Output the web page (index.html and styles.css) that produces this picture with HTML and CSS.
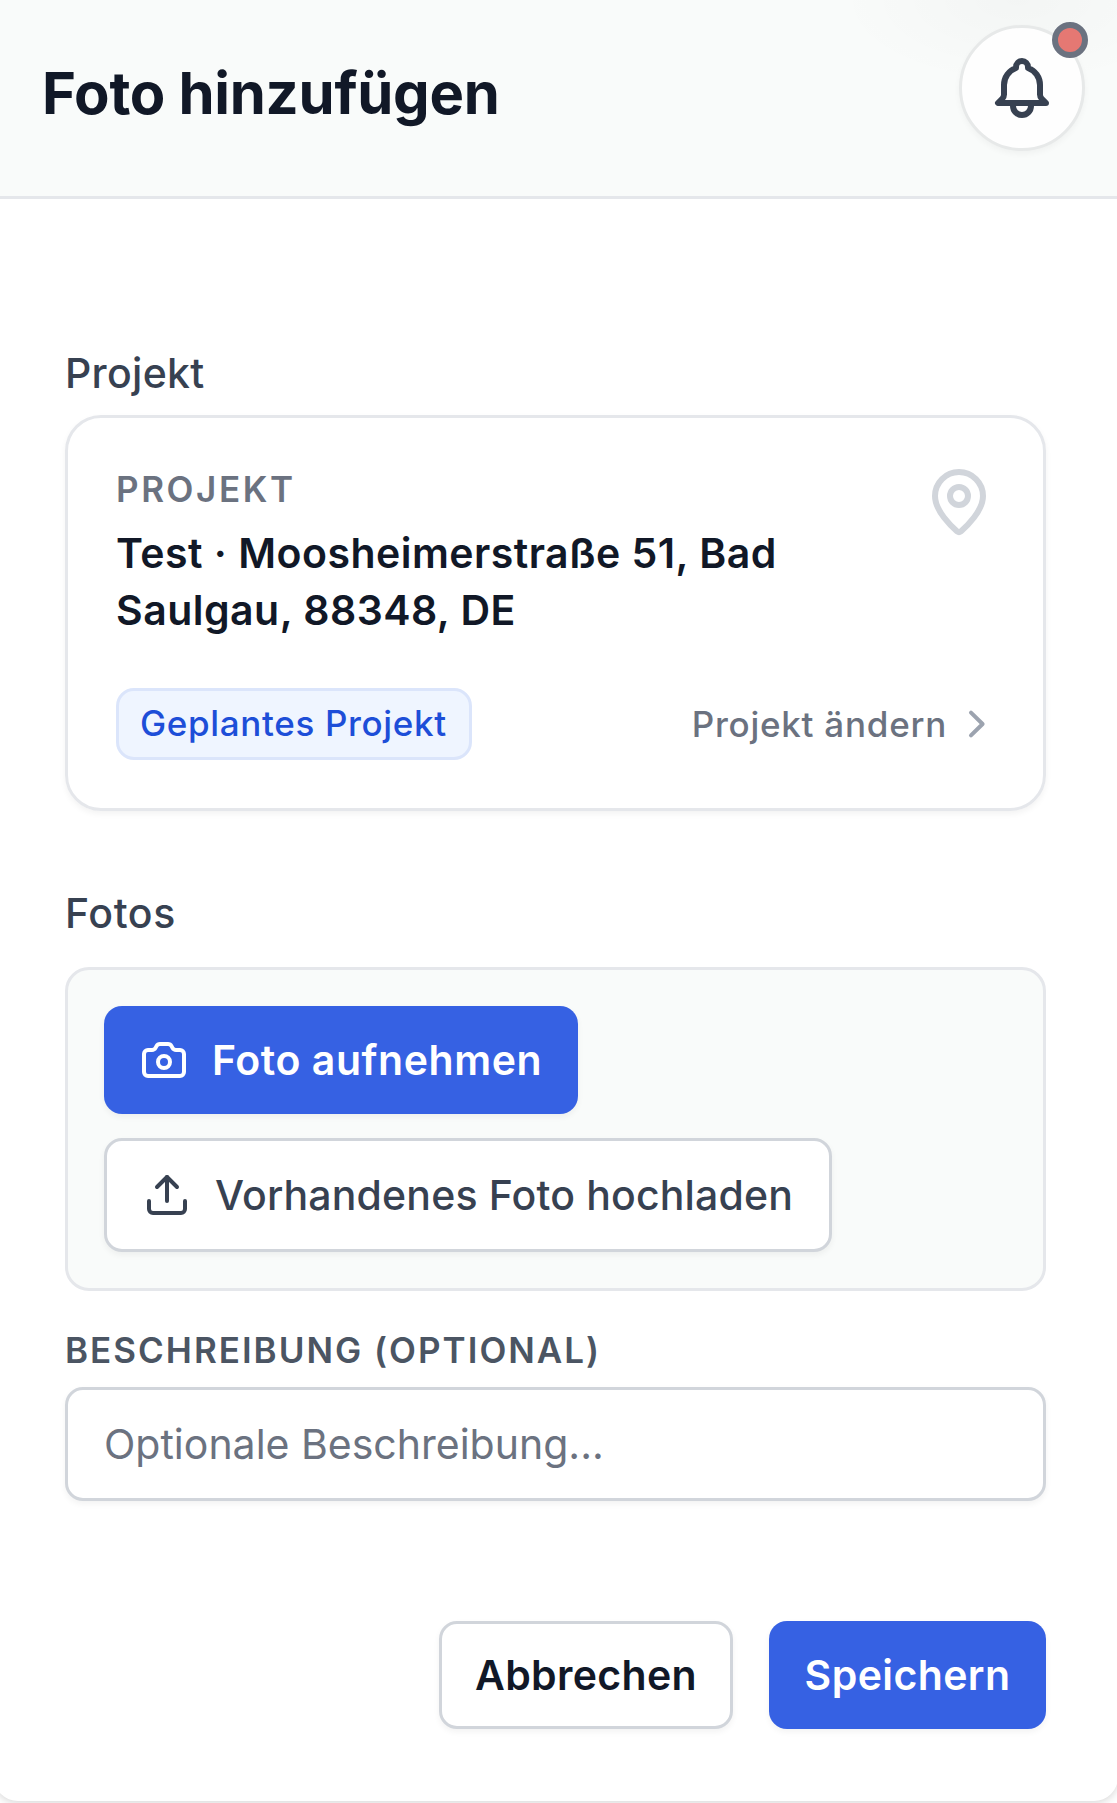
FILE: index.html
```
<!DOCTYPE html>
<html lang="de">
<head>
    <meta charset="UTF-8">
    <meta name="viewport" content="width=device-width, initial-scale=1.0">
    <title>Foto hinzufügen</title>
    <link rel="stylesheet" href="styles.css">
</head>
<body>
    <div class="panel">
        <header>
            <h1>Foto hinzufügen</h1>
            <button class="bell-button" aria-label="Benachrichtigungen">
                <svg class="bell-icon" viewBox="0 0 24 24">
                    <path d="M15 17h5l-1.405-1.405A2.032 2.032 0 0118 14.158V11a6.002 6.002 0 00-4-5.659V5a2 2 0 10-4 0v.341C7.67 6.165 6 8.388 6 11v3.159c0 .538-.214 1.055-.595 1.436L4 17h5m6 0v1a3 3 0 11-6 0v-1m6 0H9"/>
                </svg>
                <span class="bell-dot"></span>
            </button>
        </header>

        <form>
            <p class="field-label project-label">Projekt</p>
            <div class="project-card">
                <div class="project-top">
                    <div>
                        <p class="project-kicker">Projekt</p>
                        <h2>Test · Moosheimerstraße 51, Bad<br>Saulgau, 88348, DE</h2>
                    </div>
                    <svg class="pin-icon" viewBox="0 0 24 24">
                        <path d="M20 10c0 4.993-5.539 10.193-7.399 11.799a1 1 0 0 1-1.202 0C9.539 20.193 4 14.993 4 10a8 8 0 0 1 16 0"/>
                        <circle cx="12" cy="10" r="3"/>
                    </svg>
                </div>
                <div class="project-bottom">
                    <span class="project-tag">Geplantes Projekt</span>
                    <a class="project-change">Projekt ändern
                        <svg class="chevron-icon" viewBox="0 0 42 42">
                            <path d="M18 9.6L29.6 21L18 32.4"/>
                        </svg>
                    </a>
                </div>
            </div>

            <p class="field-label photo-label">Fotos</p>
            <div class="photo-box">
                <button type="button" class="btn btn-primary btn-camera">
                    <svg viewBox="0 0 24 24">
                        <path d="M13.997 4a2 2 0 0 1 1.76 1.05l.486.9A2 2 0 0 0 18.003 7H20a2 2 0 0 1 2 2v9a2 2 0 0 1-2 2H4a2 2 0 0 1-2-2V9a2 2 0 0 1 2-2h1.997a2 2 0 0 0 1.759-1.048l.489-.904A2 2 0 0 1 10.004 4z"/>
                        <circle cx="12" cy="13" r="3"/>
                    </svg>
                    Foto aufnehmen
                </button>
                <button type="button" class="btn btn-upload">
                    <svg viewBox="0 0 24 24">
                        <path d="M12 3v12"/>
                        <path d="m17 8-5-5-5 5"/>
                        <path d="M21 15v4a2 2 0 0 1-2 2H5a2 2 0 0 1-2-2v-4"/>
                    </svg>
                    Vorhandenes Foto hochladen
                </button>
            </div>

            <label class="description-label" for="description">Beschreibung (optional)</label>
            <input type="text" id="description" placeholder="Optionale Beschreibung...">

            <div class="actions">
                <button type="button" class="btn btn-cancel">Abbrechen</button>
                <button type="button" class="btn btn-primary btn-save">Speichern</button>
            </div>
        </form>
    </div>
</body>
</html>
```
FILE: styles.css
```
*{
    margin: 0px;
    padding: 0px;
    box-sizing: border-box;
}

body{
    font-family: Inter, "Liberation Sans", sans-serif;
    background-color: #FFF;
    color: #111827;
    height: 1803px;
    overflow: hidden;
}

svg{
    fill: none;
    stroke: currentColor;
    stroke-width: 2;
    stroke-linecap: round;
    stroke-linejoin: round;
    flex-shrink: 0;
}

/* the dialog is slightly wider than the window */
.panel{
    height: 1801px;
    margin: 0px -1px 0px -6px;
    background-color: #FFF;
    border-radius: 0px 0px 24px 24px;
    box-shadow: 0px 2px 9px rgba(0,0,0,0.16);
}

header{
    height: 199px;
    padding: 25px 33px 0px 48px;
    display: flex;
    justify-content: space-between;
    align-items: flex-start;
    background-color: #F9FBFA;
    background-image: radial-gradient(ellipse 180px 85px at 1024px 0px, rgba(0,0,0,0.025), rgba(0,0,0,0));
    border-bottom: 3px solid #E5E7EB;
}

h1{
    margin-top: 26px;
    font-size: 58px;
    line-height: 84px;
    font-weight: 700;
    letter-spacing: -0.28px;
}

.bell-button{
    position: relative;
    width: 126px;
    height: 126px;
    display: flex;
    justify-content: center;
    align-items: center;
    color: #374151;
    background-color: #FEFEFE;
    border: 3px solid #E7E9E9;
    border-radius: 50%;
    box-shadow: 0px 3px 6px rgba(0,0,0,0.04);
}

.bell-icon{
    width: 72px;
    height: 72px;
}

.bell-dot{
    position: absolute;
    top: -6px;
    right: -6px;
    width: 36px;
    height: 36px;
    background-color: #E57873;
    border: 6px solid #6B7280;
    border-radius: 50%;
}

form{
    padding: 144px 72px 72px 71px;
}

.field-label{
    font-size: 41px;
    line-height: 60px;
    font-weight: 500;
    letter-spacing: 0.3px;
    color: #374151;
}

.project-label{
    margin-bottom: 12px;
}

.photo-label{
    margin: 72px 0px 24px;
    letter-spacing: 0.6px;
}

.project-card{
    height: 396px;
    padding: 48px;
    border: 3px solid #E5E7EB;
    border-radius: 36px;
    box-shadow: 0px 3px 6px rgba(0,0,0,0.05);
}

.project-top{
    display: flex;
    justify-content: space-between;
    align-items: flex-start;
}

.project-kicker{
    font-size: 35px;
    line-height: 46px;
    font-weight: 600;
    letter-spacing: 2.6px;
    text-transform: uppercase;
    color: #6B7280;
}

h2{
    margin-top: 13px;
    font-size: 41px;
    line-height: 57px;
    font-weight: 600;
    letter-spacing: 0.48px;
}

.pin-icon{
    width: 72px;
    height: 72px;
    color: #D1D5DB;
}

.project-bottom{
    margin-top: 49px;
    display: flex;
    justify-content: space-between;
    align-items: center;
}

.project-tag{
    width: 356px;
    height: 72px;
    padding-left: 21px;
    font-size: 35px;
    line-height: 64px;
    font-weight: 500;
    letter-spacing: 0.65px;
    color: #1D4ED8;
    background-color: #EFF5FF;
    border: 3px solid #DBE5FB;
    border-radius: 18px;
}

.project-change{
    display: flex;
    align-items: center;
    gap: 6px;
    font-size: 35px;
    line-height: 48px;
    font-weight: 500;
    letter-spacing: 0.75px;
    color: #6B7280;
}

.chevron-icon{
    width: 42px;
    height: 42px;
    stroke-width: 4;
    color: #9CA3AF;
}

.photo-box{
    height: 324px;
    padding: 36px;
    display: flex;
    flex-direction: column;
    align-items: flex-start;
    gap: 24px;
    background-color: #F9FBFA;
    border: 3px solid #E5E7EB;
    border-radius: 24px;
}

.btn{
    height: 108px;
    display: flex;
    align-items: center;
    gap: 24px;
    font-family: inherit;
    font-size: 41px;
    font-weight: 600;
    white-space: nowrap;
    color: #111827;
    background-color: #FFF;
    border: 3px solid #D1D5DB;
    border-radius: 18px;
    box-shadow: 0px 3px 6px rgba(0,0,0,0.05);
}

.btn svg{
    width: 48px;
    height: 48px;
}

.btn-primary{
    color: #FFF;
    background-color: #3661E3;
    border: none;
}

.btn-camera{
    width: 474px;
    padding-left: 36px;
    letter-spacing: 0.55px;
}

.btn-upload{
    width: 728px;
    height: 114px;
    padding-left: 36px;
    font-weight: 500;
    letter-spacing: 0.15px;
    color: #374151;
}

.description-label{
    display: block;
    margin: 35px 0px 13px;
    font-size: 35px;
    line-height: 48px;
    font-weight: 600;
    letter-spacing: 2px;
    text-transform: uppercase;
    color: #4B5563;
}

input{
    display: block;
    width: 100%;
    height: 114px;
    padding: 0px 36px;
    font-family: inherit;
    font-size: 41px;
    background-color: #FFF;
    border: 3px solid #D1D5DB;
    border-radius: 18px;
    box-shadow: 0px 3px 6px rgba(0,0,0,0.05);
}

input::placeholder{
    color: #6B7280;
}

.actions{
    margin-top: 120px;
    display: flex;
    justify-content: flex-end;
    gap: 36px;
}

.btn-cancel{
    width: 294px;
    justify-content: center;
    letter-spacing: 0.35px;
}

.btn-save{
    width: 277px;
    justify-content: center;
    letter-spacing: 0.4px;
}
```
